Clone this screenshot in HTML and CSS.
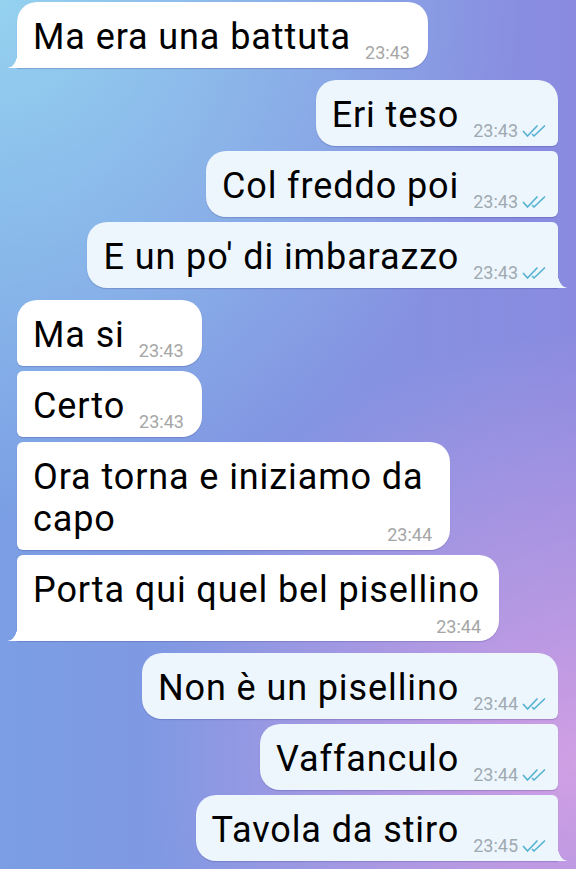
FILE: index.html
```html
<!DOCTYPE html>
<html lang="it">
<head>
    <meta charset="UTF-8">
    <meta name="viewport" content="width=device-width, initial-scale=1.0">
    <title>Chat</title>
    <link rel="stylesheet" href="styles.css">
</head>
<body>
    <div id="chat">
        <div class="msg in tail">
            <div class="bubble">Ma era una battuta<span class="meta"><span class="time">23:43</span></span></div>
        </div>

        <div class="msg out group">
            <div class="bubble">Eri teso<span class="meta"><span class="time">23:43</span><svg class="check" width="26" height="14" viewBox="0 0 26 14"><path d="M1.5 7.5 L5.5 12 L15 2 M10.5 10.5 L12 12 L22.5 2"/></svg></span></div>
        </div>
        <div class="msg out cont">
            <div class="bubble">Col freddo poi<span class="meta"><span class="time">23:43</span><svg class="check" width="26" height="14" viewBox="0 0 26 14"><path d="M1.5 7.5 L5.5 12 L15 2 M10.5 10.5 L12 12 L22.5 2"/></svg></span></div>
        </div>
        <div class="msg out cont tail">
            <div class="bubble">E un po' di imbarazzo<span class="meta"><span class="time">23:43</span><svg class="check" width="26" height="14" viewBox="0 0 26 14"><path d="M1.5 7.5 L5.5 12 L15 2 M10.5 10.5 L12 12 L22.5 2"/></svg></span></div>
        </div>

        <div class="msg in group">
            <div class="bubble">Ma si<span class="meta"><span class="time">23:43</span></span></div>
        </div>
        <div class="msg in cont">
            <div class="bubble">Certo<span class="meta"><span class="time">23:43</span></span></div>
        </div>
        <div class="msg in cont">
            <div class="bubble two-lines">Ora torna e iniziamo da<br>capo<span class="meta"><span class="time">23:44</span></span></div>
        </div>
        <div class="msg in cont tail">
            <div class="bubble stacked">Porta qui quel bel pisellino<span class="meta"><span class="time">23:44</span></span></div>
        </div>

        <div class="msg out group">
            <div class="bubble">Non è un pisellino<span class="meta"><span class="time">23:44</span><svg class="check" width="26" height="14" viewBox="0 0 26 14"><path d="M1.5 7.5 L5.5 12 L15 2 M10.5 10.5 L12 12 L22.5 2"/></svg></span></div>
        </div>
        <div class="msg out cont">
            <div class="bubble">Vaffanculo<span class="meta"><span class="time">23:44</span><svg class="check" width="26" height="14" viewBox="0 0 26 14"><path d="M1.5 7.5 L5.5 12 L15 2 M10.5 10.5 L12 12 L22.5 2"/></svg></span></div>
        </div>
        <div class="msg out cont tail">
            <div class="bubble">Tavola da stiro<span class="meta"><span class="time">23:45</span><svg class="check" width="26" height="14" viewBox="0 0 26 14"><path d="M1.5 7.5 L5.5 12 L15 2 M10.5 10.5 L12 12 L22.5 2"/></svg></span></div>
        </div>
    </div>
</body>
</html>
```

FILE: styles.css
```css
html, body {
    height: 100%;
}
body {
    margin: 0;
    font-family: 'Roboto', 'Noto Sans', sans-serif;
    background:
        radial-gradient(circle at 0% 0%, rgba(150, 212, 240, 0.95) 0, rgba(150, 212, 240, 0) 50%),
        radial-gradient(circle at 100% 88%, rgba(212, 160, 228, 0.95) 0, rgba(212, 160, 228, 0) 45%),
        linear-gradient(to right, #7b9ee4 0%, #8a8be0 100%);
    overflow: hidden;
}
#chat {
    display: flex;
    flex-direction: column;
    padding: 2px 18px 0 17px;
}
.msg {
    display: flex;
    margin-top: 5px;
}
.msg.group {
    margin-top: 12px;
}
.msg:first-child {
    margin-top: 0;
}
.msg.in {
    justify-content: flex-start;
}
.msg.out {
    justify-content: flex-end;
}
.bubble {
    position: relative;
    display: flow-root;
    max-width: 482px;
    box-sizing: border-box;
    padding: 14px 18px 10px 16px;
    font-size: 36px;
    letter-spacing: 0.9px;
    line-height: 42px;
    color: #000;
    background-color: #fff;
    border-radius: 20px 20px 20px 6px;
    box-shadow: 0 1px 1px rgba(40, 40, 110, 0.22);
}
.bubble.two-lines {
    width: 433px;
}
.out .bubble {
    background-color: #eef6fd;
    padding-right: 10px;
    border-radius: 20px 20px 6px 20px;
}
.in.cont .bubble {
    border-top-left-radius: 6px;
}
.out.cont .bubble {
    border-top-right-radius: 6px;
}
.in.tail .bubble {
    border-bottom-left-radius: 0;
}
.out.tail .bubble {
    border-bottom-right-radius: 0;
}
.in.tail .bubble::before {
    content: "";
    position: absolute;
    left: -9px;
    bottom: 0;
    width: 10px;
    height: 18px;
    background: radial-gradient(ellipse 10px 18px at 0 0, transparent 96%, #fff 100%);
}
.out.tail .bubble::before {
    content: "";
    position: absolute;
    right: -9px;
    bottom: 0;
    width: 10px;
    height: 18px;
    background: radial-gradient(ellipse 10px 18px at 100% 0, transparent 96%, #eef6fd 100%);
}
.meta {
    float: right;
    display: flex;
    align-items: flex-end;
    gap: 4px;
    margin: 27px 0 -27px 14px;
    line-height: 20px;
    letter-spacing: 0;
}
.stacked .meta {
    margin: 6px 0 -6px 14px;
}
.time {
    font-size: 18px;
    color: #a6a6a6;
}
.out .time {
    color: #9eaab2;
}
.check {
    margin-bottom: 3px;
}
.check path {
    fill: none;
    stroke: #56b3d2;
    stroke-width: 1.7;
    stroke-linecap: round;
    stroke-linejoin: round;
}
```
